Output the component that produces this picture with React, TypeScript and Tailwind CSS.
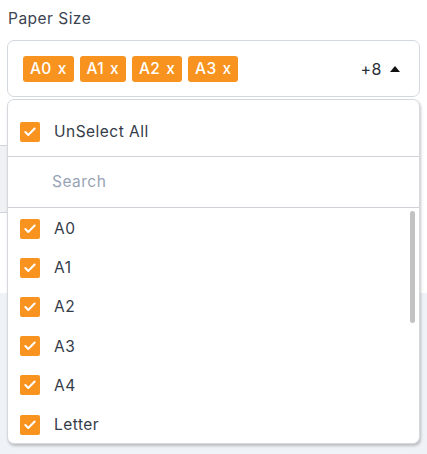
import { Check } from 'lucide-react'

const SELECTED = ['A0', 'A1', 'A2', 'A3']
const OPTIONS = ['A0', 'A1', 'A2', 'A3', 'A4', 'Letter']

function OrangeBox(): JSX.Element {
  return (
    <span className="flex h-5 w-5 shrink-0 items-center justify-center rounded-[2px] bg-[#f7931e]">
      <Check size={14} strokeWidth={3.5} className="text-white" />
    </span>
  )
}

export default function App(): JSX.Element {
  return (
    <div
      className="relative h-[454px] w-[427px] overflow-hidden bg-white text-[#343b48] tracking-[0.03em]"
      style={{ fontFamily: 'Inter, "Noto Sans", sans-serif' }}
    >
      {/* page content behind the open menu */}
      <div className="px-[7px] pt-[8px]">
        <div className="pl-[1px] text-[15.5px] leading-[22px] text-[#3d4451]">Paper Size</div>
        <div className="mt-[10px] flex h-[57px] items-center rounded-[7px] border border-[#d3d8df] pl-[15px] pr-[19px]">
          <div className="flex gap-[6px]">
            {SELECTED.map((s) => (
              <span
                key={s}
                className="flex h-[26px] items-center rounded-[3px] bg-[#f7931e] px-[7px] text-[15.5px] font-medium tracking-[0.02em] text-white"
              >
                {s}
                <span className="ml-[6px]">x</span>
              </span>
            ))}
          </div>
          <div className="ml-auto flex items-center gap-[8px] text-[16px] text-[#2b2f36]">
            <span>+8</span>
            <span className="h-0 w-0 border-x-[5px] border-b-[6px] border-x-transparent border-b-[#111]" />
          </div>
        </div>
      </div>
      <div className="mt-[48px] h-[68px] w-[220px] border-y border-[#cfd4da] bg-[#f0f1f3]" />
      <div className="mt-[80px] h-[200px] bg-[#eff2f6]" />

      {/* open menu */}
      <div className="absolute left-[7px] top-[99px] h-[345px] w-[413px] overflow-hidden rounded-[7px] border border-[#d5d9de] bg-white shadow-[1px_2px_3px_rgba(0,0,0,0.22)]">
        <div className="flex h-[57px] items-center gap-[14px] border-b border-[#cfd3d8] pl-[12px] pt-[7px] text-[15.5px]">
          <OrangeBox />
          <span>UnSelect All</span>
        </div>
        <div className="flex h-[51px] items-center border-b border-[#cfd3d8] pl-[44px] text-[15.5px] text-[#98a3b5]">
          Search
        </div>
        <div className="relative pt-[1px]">
          {OPTIONS.map((o) => (
            <div key={o} className="flex h-[39.2px] items-center gap-[14px] pl-[12px] text-[15.5px]">
              <OrangeBox />
              <span>{o}</span>
            </div>
          ))}
          <div className="absolute right-[4px] top-[3px] h-[112px] w-[5px] rounded-full bg-[#c2c2c2]" />
        </div>
      </div>
    </div>
  )
}
